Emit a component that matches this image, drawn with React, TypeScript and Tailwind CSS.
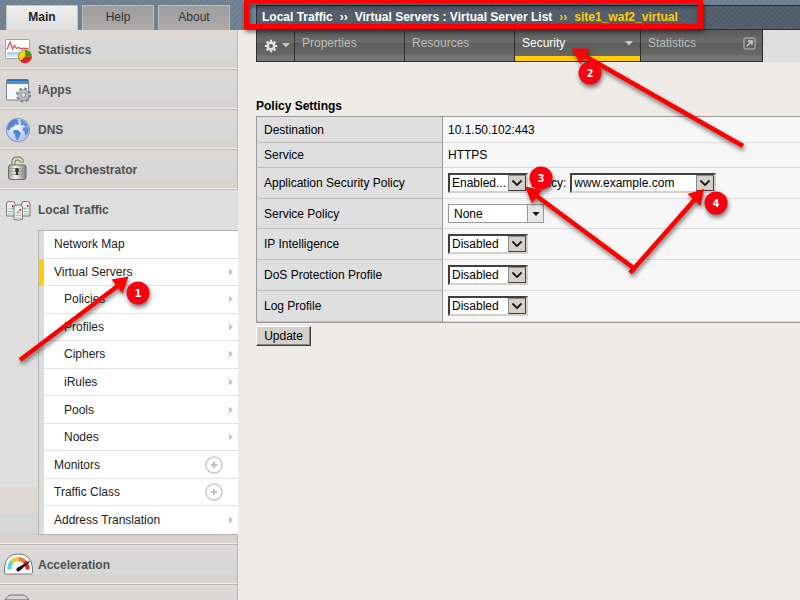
import React from "react";

const rowGradient =
  "bg-[linear-gradient(#e0d9d6_0px,#dcd8d5_13px,#d7d7d7_14px,#d7d7d7_29px,#d6d3ce_30px,#d6d3ce_38px,#f2f0ee_38px)]";
const stripes =
  "bg-[repeating-linear-gradient(135deg,#738592_0px,#738592_2px,#6d8091_2px,#6d8091_4px)]";
const darkStripes =
  "bg-[repeating-linear-gradient(135deg,#54606c_0px,#54606c_2px,#505c6a_2px,#505c6a_4px)]";

function StatisticsIcon() {
  return (
    <svg width="30" height="28" viewBox="0 0 30 28" aria-hidden="true">
      <rect x="1.5" y="3.5" width="24" height="19" rx="1" fill="#fdfdfd" stroke="#a2a2a2" />
      <rect x="3" y="16" width="21" height="3" fill="#b9d5ee" />
      <rect x="3" y="19" width="21" height="2" fill="#dce9f5" />
      <path d="M3 13.500l3-7.500 2.500 7 2-3.500 2 3 2-1 2 1h8" fill="none" stroke="#d0555c" strokeWidth="1.300" />
      <circle cx="21" cy="20.500" r="6.500" fill="#f5d722" stroke="#8a6a1a" strokeWidth=".8" />
      <path d="M21 20.500V14A6.500 6.500 0 0 1 27.500 20.500z" fill="#35a321" />
      <path d="M21 20.500h6.500A6.500 6.500 0 0 1 16.400 25.100z" fill="#dc2032" />
    </svg>
  );
}

function AppsIcon() {
  return (
    <svg width="30" height="28" viewBox="0 0 30 28" aria-hidden="true">
      <rect x="2.500" y="3.500" width="22" height="20.500" rx="1" fill="#f6f8fb" stroke="#7c8286" />
      <path d="M3 4h21v4H3z" fill="#4a90dc" />
      <path d="M3 3.500h21v1.300H3z" fill="#2b62a8" />
      <circle cx="19.500" cy="19" r="6.300" fill="none" stroke="#80898e" strokeWidth="2.600" strokeDasharray="2.500 2.450" />
      <circle cx="19.500" cy="19" r="5.500" fill="#b7c0c4" stroke="#80898e" strokeWidth=".7" />
      <circle cx="19.500" cy="19" r="2.300" fill="#e3e8ea" stroke="#80898e" />
    </svg>
  );
}

function GlobeIcon() {
  return (
    <svg width="30" height="28" viewBox="0 0 30 28" aria-hidden="true">
      <defs>
        <radialGradient id="globe" cx=".45" cy=".4">
          <stop offset="0" stopColor="#f4f9ff" />
          <stop offset="1" stopColor="#b4ccf2" />
        </radialGradient>
      </defs>
      <circle cx="14" cy="14" r="11.700" fill="url(#globe)" stroke="#8097c2" />
      <path d="M3.500 10Q6 4 11 3l4 1-1.500 2 2 1.500-2.500 1.500-1.500-1-1.500 2.500-3 1-2 3-2-1zM10 14l3.500 0 3.500 3-1 3-2.500 4.500-2-2.500-.5-3.500-2-2z" fill="#5a83d6" />
      <path d="M17 3.500q5 2 7 6.500l-2.500 1-2-2-2 .5-1-1.500 1.500-1.500-2-1zM19.500 11.500l4-.5 1.500 2-1.500 5-2 2-1-4-2-2z" fill="#6189d8" />
    </svg>
  );
}

function LockIcon() {
  return (
    <svg width="30" height="28" viewBox="0 0 30 28" aria-hidden="true">
      <defs>
        <linearGradient id="lock" x2="1">
          <stop offset="0" stopColor="#98988f" />
          <stop offset=".4" stopColor="#f4f4f2" />
          <stop offset="1" stopColor="#7b7b74" />
        </linearGradient>
      </defs>
      <path d="M9.500 10V6q0-3.500 3.500-3.500h1q3.500 0 4 4" fill="none" stroke="#6f7052" strokeWidth="4" />
      <path d="M9.500 10V6q0-3.500 3.500-3.500h1q3.500 0 4 3.500" fill="none" stroke="#dcddc0" strokeWidth="2.200" />
      <rect x="4.500" y="9" width="17.500" height="14.500" rx="2" fill="url(#lock)" stroke="#6e6e68" />
      <path d="M6 12.500h14.500M6 15.500h14.500M6 18.500h14.500" stroke="#97978f" strokeWidth=".8" />
      <circle cx="13" cy="14" r="2" fill="#333" />
      <path d="M12.200 14h1.600l.6 5h-2.800z" fill="#333" />
    </svg>
  );
}

function TrafficIcon() {
  return (
    <svg width="30" height="28" viewBox="0 0 30 28" aria-hidden="true">
      <g fill="#ececec" stroke="#7a7a7a">
        <path d="M2.500 20V8q0-2.500 2.500-2.500h3.500q2.500 0 2.500 2.500v12z" />
        <path d="M17.500 20V8q0-2.500 2.500-2.500h3.500q2.500 0 2.500 2.500v12z" />
        <path d="M10 23.500V11l1.500-2h5.500l1.500 2v12.500q-4 1-8.500 0z" />
      </g>
      <path d="M4 13h5M4 15.500h5M4 18h5M20 13h5M20 15.500h5M20 18h5M11.500 17h5.500M11.500 19.500h5.500M11.500 22h5.500" stroke="#bcbcbc" />
      <path d="M8 9h1.500v2H8zM23 9h1.500v2H23zM15.500 13H17v2h-1.500z" fill="#e0242c" />
      <path d="M8 11.500h1.500V13H8zM19.500 11.500H21V13h-1.500zM13.500 15H15v1.500h-1.500z" fill="#46c34a" />
    </svg>
  );
}

function GaugeIcon() {
  return (
    <svg width="30" height="28" viewBox="0 0 30 28" aria-hidden="true">
      <path d="M.5 17Q1.500 3 14.500 3T28.500 17V21q0 2-2 2H2.500q-2 0-2-2z" fill="#fdfdfd" stroke="#777" />
      <path d="M5.500 18.500Q5 14 8 10.500" fill="none" stroke="#5ad6d0" strokeWidth="4" />
      <path d="M8 10.500q2.500-2.500 6.500-2.500" fill="none" stroke="#f2c82c" strokeWidth="4" />
      <path d="M14.500 8q3.500 0 6 2.500" fill="none" stroke="#ee7a22" strokeWidth="4" />
      <path d="M20.500 10.500q3 3 3.200 8" fill="none" stroke="#ec2222" strokeWidth="4" />
      <path d="M25.500 10.500L13 17.500q-1 3 2 2.500z" fill="#111" stroke="#111" />
    </svg>
  );
}

function DeviceIcon() {
  return (
    <svg width="30" height="28" viewBox="0 0 30 28" aria-hidden="true">
      <path d="M1.500 14V8l4-4h15l4 4v6z" fill="#d4d4d4" stroke="#707070" />
      <path d="M2 8.500h22" stroke="#9a9a9a" />
    </svg>
  );
}

function GearIcon() {
  return (
    <svg width="14" height="14" viewBox="0 0 14 14" aria-hidden="true">
      <g stroke="#e0e0e0" strokeWidth="2.200">
        <path d="M7 .8v12.400M.8 7h12.400M2.600 2.600l8.800 8.800M11.400 2.600l-8.800 8.800" />
      </g>
      <circle cx="7" cy="7" r="4.500" fill="#e0e0e0" />
      <circle cx="7" cy="7" r="2" fill="#5c5c5c" />
    </svg>
  );
}

function DownTriangle() {
  return (
    <svg width="8" height="5" viewBox="0 0 8 5" aria-hidden="true">
      <path d="M0 0h8L4 4.500z" fill="#c6c6c6" />
    </svg>
  );
}

function SideRow({ icon, label }: { icon: React.ReactNode; label?: string }) {
  return (
    <li className={`h-10 border-r border-b border-[#b9b9b9] ${rowGradient}`}>
      <a
        href="#"
        aria-label={label ?? "More"}
        className="flex h-full items-center gap-1 pl-1 text-xs font-bold text-[#505050]"
      >
        {icon}
        {label && <span>{label}</span>}
      </a>
    </li>
  );
}

const subItems = [
  { label: "Network Map", mark: "none" },
  { label: "Virtual Servers", mark: "arrow", active: true },
  { label: "Policies", mark: "arrow", nested: true },
  { label: "Profiles", mark: "arrow", nested: true },
  { label: "Ciphers", mark: "arrow", nested: true },
  { label: "iRules", mark: "arrow", nested: true },
  { label: "Pools", mark: "arrow", nested: true },
  { label: "Nodes", mark: "arrow", nested: true },
  { label: "Monitors", mark: "plus" },
  { label: "Traffic Class", mark: "plus" },
  { label: "Address Translation", mark: "arrow" },
];

function Sidebar() {
  return (
    <aside className="w-[238px] shrink-0 overflow-hidden">
      <nav aria-label="Sections" className={`flex h-[30px] items-end gap-1 pl-1.5 ${stripes}`}>
        <a href="#" className="flex h-[25px] w-[72px] items-center justify-center border border-b-0 border-[#c4c4c4] bg-linear-to-b from-[#f0efee] to-[#dfdfdf] pb-0.5 text-xs font-bold text-[#222]">
          Main
        </a>
        <a href="#" className="flex h-[25px] w-[72px] items-center justify-center border border-b-0 border-[#bdbdbd] bg-linear-to-b from-[#9e9e9e] to-[#acaaa8] pb-0.5 text-xs text-[#333]">
          Help
        </a>
        <a href="#" className="flex h-[25px] w-[72px] items-center justify-center border border-b-0 border-[#bdbdbd] bg-linear-to-b from-[#9e9e9e] to-[#acaaa8] pb-0.5 text-xs text-[#333]">
          About
        </a>
      </nav>
      <ul>
        <SideRow icon={<StatisticsIcon />} label="Statistics" />
        <SideRow icon={<AppsIcon />} label="iApps" />
        <SideRow icon={<GlobeIcon />} label="DNS" />
        <SideRow icon={<LockIcon />} label="SSL Orchestrator" />
        <li className="border-b border-[#b9b9b9] bg-[#dfdfdf]">
          <a href="#" className="flex h-10 items-center gap-1 pl-1 text-xs font-bold text-[#505050]">
            <TrafficIcon />
            <span>Local Traffic</span>
          </a>
          <div className="bg-[linear-gradient(to_top,#f2f0ee_0px,#f2f0ee_1px,#d6d3ce_1px,#d6d3ce_11px,#d7d7d7_12px,#d5d6d8_29px,#dfd7d5_31px,#dcd9d3_41px,#dcd9d4_57px,#dfdfdf_58px)]">
            <ul className="ml-[38px] grid h-[305px] auto-rows-fr border border-r-0 border-[#b4b4b4]">
              {subItems.map((item) => (
                <li
                  key={item.label}
                  className={`border-b border-l-[5px] border-b-[#e2e2e2] bg-white last:border-b-0 ${
                    item.active ? "border-l-[#ffcc00]" : "border-l-[#dcdcdc]"
                  }`}
                >
                  <a
                    href="#"
                    className={`flex h-full items-center justify-between text-xs text-[#222] ${
                      item.nested ? "pl-5" : "pl-2.5"
                    } ${item.mark === "plus" ? "pr-[15px]" : "pr-[5px]"}`}
                  >
                    <span>{item.label}</span>
                    {item.mark === "arrow" && (
                      <svg width="4" height="8" viewBox="0 0 4 8" aria-hidden="true">
                        <path d="M0 0.500L4 4L0 7.500z" fill="#c4c4c4" />
                      </svg>
                    )}
                    {item.mark === "plus" && (
                      <svg width="18" height="18" viewBox="0 0 18 18" aria-hidden="true">
                        <circle cx="9" cy="9" r="8" fill="none" stroke="#c9c9c9" strokeWidth="1.500" />
                        <path d="M9 6v6M6 9h6" stroke="#c0c0c0" strokeWidth="2" />
                      </svg>
                    )}
                  </a>
                </li>
              ))}
            </ul>
            <div className="h-[9px] border-r border-[#b9b9b9]" />
          </div>
        </li>
        <SideRow icon={<GaugeIcon />} label="Acceleration" />
        <SideRow icon={<DeviceIcon />} />
      </ul>
    </aside>
  );
}

const tabBase =
  "flex h-full border-r border-b border-[#2e2e2e] pl-[7px] text-xs bg-[linear-gradient(#5a5a5a_0px,#6c6c6a_12px,#5d5d5d_13px,#676865_25px,#747573_26px)]";

function Header() {
  return (
    <header>
      <div className={`h-[30px] pt-[5px] pl-[18px] ${stripes}`}>
        <nav
          aria-label="Breadcrumb"
          className={`flex h-[25px] items-center gap-[7px] border border-r-0 border-[#2b3038] pb-0.5 pl-[5px] text-xs font-bold whitespace-nowrap text-white ${darkStripes}`}
        >
          <a href="#">Local Traffic</a>
          <span>››</span>
          <a href="#">Virtual Servers : Virtual Server List</a>
          <span className="text-[#ffcc00]">››</span>
          <span className="text-[#ffcc00]">site1_waf2_virtual</span>
        </nav>
      </div>
      <div className="flex h-8 pl-[18px]">
        <button type="button" aria-label="Options" className={`${tabBase} w-[39px] items-center gap-1 border-l pl-1.5`}>
          <GearIcon />
          <DownTriangle />
        </button>
        <a href="#" className={`${tabBase} w-[110px] pt-[5px] text-[#bdbdbd]`}>
          Properties
        </a>
        <a href="#" className={`${tabBase} w-[110px] pt-[5px] text-[#bdbdbd]`}>
          Resources
        </a>
        <a
          href="#"
          className="flex h-full w-[126px] justify-between border-r border-b border-[#2e2e2e] bg-[linear-gradient(#5a5a5a_0px,#6c6c6a_12px,#5d5d5d_13px,#676865_26px,#ffcc00_26px)] pt-[5px] pr-[7px] pl-[7px] text-xs text-white"
        >
          Security
          <span className="pt-[6px]">
            <DownTriangle />
          </span>
        </a>
        <a href="#" className={`${tabBase} w-[122px] justify-between pt-[5px] pr-[6px] text-[#bdbdbd]`}>
          Statistics
          <svg width="13" height="13" viewBox="0 0 13 13" className="mt-0.5" aria-hidden="true">
            <rect x="1" y="1" width="11" height="11" rx="1" fill="none" stroke="#bdbdbd" />
            <path d="M4 9l4-4M5 4h4v4" fill="none" stroke="#d0d0d0" strokeWidth="1.500" />
          </svg>
        </a>
        <div className="flex-1 bg-[#dfdfdf]" />
      </div>
    </header>
  );
}

function ClassicSelect({ id, value, width }: { id: string; value: string; width: string }) {
  return (
    <span className={`relative inline-flex h-5 ${width}`}>
      <select
        id={id}
        className="h-full w-full appearance-none border-2 border-t-[#404040] border-r-[#d5d1ca] border-b-[#d5d1ca] border-l-[#404040] bg-white pl-0.5 text-xs text-black"
      >
        <option>{value}</option>
      </select>
      <span className="pointer-events-none absolute top-0.5 right-0.5 bottom-0.5 flex w-[18px] items-center justify-center border border-t-[#888] border-r-[#404040] border-b-[#404040] border-l-[#888] bg-[#d5d1ca]">
        <svg width="10" height="6" viewBox="0 0 10 6" aria-hidden="true">
          <path d="M0.500 0.500L5 5L9.500 0.500" fill="none" stroke="#000" strokeWidth="1.700" />
        </svg>
      </span>
    </span>
  );
}

function SettingRow({
  label,
  htmlFor,
  height,
  children,
}: {
  label: string;
  htmlFor?: string;
  height: string;
  children: React.ReactNode;
}) {
  return (
    <tr className={height}>
      <th
        scope="row"
        className="w-[187px] border-r border-b border-l border-r-[#999] border-b-[#c0bdb6] border-l-[#999] bg-[#dfdfdf] pl-[7px] text-left font-normal"
      >
        {htmlFor ? <label htmlFor={htmlFor}>{label}</label> : label}
      </th>
      <td className="border-b border-[#dcdcdc] bg-[#f7f7f7] pl-[5px]">
        <div className="flex items-center">{children}</div>
      </td>
    </tr>
  );
}

function PolicySettings() {
  return (
    <form className="pt-[36px] pl-[18px] text-xs text-black" onSubmit={(e) => e.preventDefault()}>
      <h2 className="h-[18px] leading-4 font-bold">Policy Settings</h2>
      <table className="w-full border-separate border-spacing-0 border-t border-b border-[#999]">
        <tbody>
          <SettingRow label="Destination" height="h-[26px]">
            10.1.50.102:443
          </SettingRow>
          <SettingRow label="Service" height="h-[25px]">
            HTTPS
          </SettingRow>
          <SettingRow label="Application Security Policy" htmlFor="asp" height="h-[31px]">
            <ClassicSelect id="asp" value="Enabled..." width="w-20" />
            <label htmlFor="policy" className="pr-1 pl-[3px]">
              Policy:
            </label>
            <ClassicSelect id="policy" value="www.example.com" width="w-[146px]" />
          </SettingRow>
          <SettingRow label="Service Policy" htmlFor="service-policy" height="h-[30px]">
            <span className="relative inline-flex h-[19px] w-24">
              <select
                id="service-policy"
                className="h-full w-full appearance-none border border-[#999] bg-white pl-[5px] text-xs text-black"
              >
                <option>None</option>
              </select>
              <span className="pointer-events-none absolute top-px right-px bottom-px flex w-4 items-center justify-center border-l border-[#999] bg-[#e8e8e8]">
                <svg width="8" height="4" viewBox="0 0 8 4" aria-hidden="true">
                  <path d="M0.500 0h7L4 4z" fill="#000" />
                </svg>
              </span>
            </span>
          </SettingRow>
          <SettingRow label="IP Intelligence" htmlFor="ip" height="h-[31px]">
            <ClassicSelect id="ip" value="Disabled" width="w-20" />
          </SettingRow>
          <SettingRow label="DoS Protection Profile" htmlFor="dos" height="h-[31px]">
            <ClassicSelect id="dos" value="Disabled" width="w-20" />
          </SettingRow>
          <SettingRow label="Log Profile" htmlFor="log" height="h-[31px]">
            <ClassicSelect id="log" value="Disabled" width="w-20" />
          </SettingRow>
        </tbody>
      </table>
      <button
        type="submit"
        className="mt-[3px] h-5 w-[55px] border border-t-white border-r-[#404040] border-b-[#404040] border-l-white bg-[#d5d1ca] text-xs leading-4 shadow-[inset_-1px_-1px_0_#88857f]"
      >
        Update
      </button>
    </form>
  );
}

const markers = [
  { n: "1", x: 138, y: 293 },
  { n: "2", x: 590, y: 73 },
  { n: "3", x: 541, y: 178 },
  { n: "4", x: 716, y: 203 },
];

function Annotations() {
  return (
    <svg
      width="800"
      height="600"
      viewBox="0 0 800 600"
      className="pointer-events-none absolute top-0 left-0 drop-shadow-[1px_3px_2px_rgba(0,0,0,0.5)]"
    >
      <rect x="246.500" y="1" width="454" height="25.500" fill="none" stroke="#ff0000" strokeWidth="5" />
      <g stroke="#ff0000" strokeWidth="4.500">
        <path d="M20 360L119 285" />
        <path d="M743 146L583 55" />
        <path d="M635 269L534 194" />
        <path d="M630 273L697 197" />
      </g>
      <g fill="#ff0000">
        <path d="M128.500 276.500L111.500 279.500L122.500 293.500z" />
        <path d="M571.500 48.500H589.500L580.500 64z" />
        <path d="M525 186.500L542 190L532 203.500z" />
        <path d="M704 189L687.500 194L700.500 206z" />
      </g>
      {markers.map((m) => (
        <g key={m.n}>
          <circle cx={m.x} cy={m.y} r="11.500" fill="#fb0010" />
          <text
            x={m.x}
            y={m.y + 4}
            textAnchor="middle"
            className="fill-white font-['DejaVu_Sans',sans-serif] text-[10px] font-bold"
          >
            {m.n}
          </text>
        </g>
      ))}
    </svg>
  );
}

export default function App() {
  return (
    <div className="relative flex h-screen overflow-hidden bg-[#efebe6] font-['Liberation_Sans',Arial,sans-serif]">
      <Sidebar />
      <main className="min-w-0 flex-1">
        <Header />
        <PolicySettings />
      </main>
      <Annotations />
    </div>
  );
}
